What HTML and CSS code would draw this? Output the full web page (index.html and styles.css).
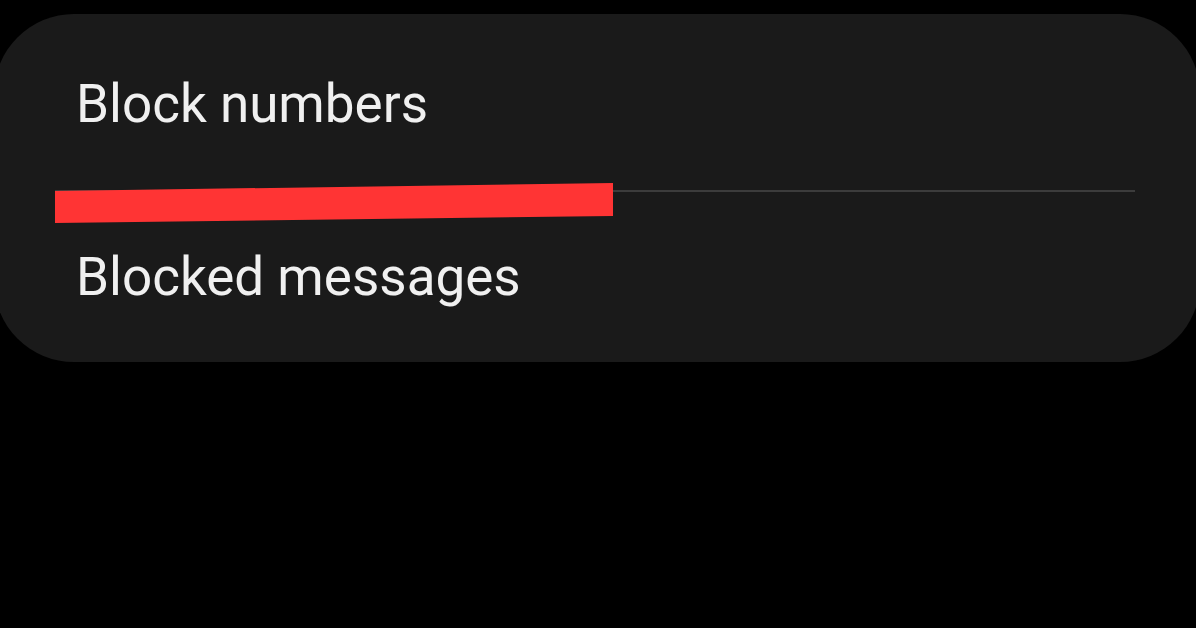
FILE: index.html
```html
<!DOCTYPE html>
<html>
<head>
<meta charset="utf-8">
<link rel="stylesheet" href="styles.css">
</head>
<body>
<div class="card">
  <div class="row row-first">Block numbers</div>
  <div class="divider">
    <svg class="mark" width="600" height="60" viewBox="0 0 600 60">
      <polygon points="0,13 558,5 558,38 0,45" fill="#ff3434"/>
    </svg>
  </div>
  <div class="row row-last">Blocked messages</div>
</div>
</body>
</html>
```
FILE: styles.css
```css
html, body {
  margin: 0;
  padding: 0;
  background: #000;
  width: 1196px;
  height: 628px;
  overflow: hidden;
}
.card {
  margin: 14px 0 0 -6px;
  width: 1206px;
  height: 348px;
  box-sizing: border-box;
  background: #1a1a1a;
  border-radius: 80px;
  display: flex;
  flex-direction: column;
  font-family: Roboto, "Noto Sans", sans-serif;
  color: #f0f0f0;
}
.row {
  font-size: 53px;
  line-height: 60px;
  padding-left: 82px;
}
.row-first {
  padding-top: 60px;
}
.divider {
  position: relative;
  margin: 56px 0 0 61px;
  width: 1080px;
  height: 2px;
  background: #3c3c3c;
}
.mark {
  position: absolute;
  left: 0;
  top: -12px;
}
.row-last {
  margin-top: 55px;
}
```
